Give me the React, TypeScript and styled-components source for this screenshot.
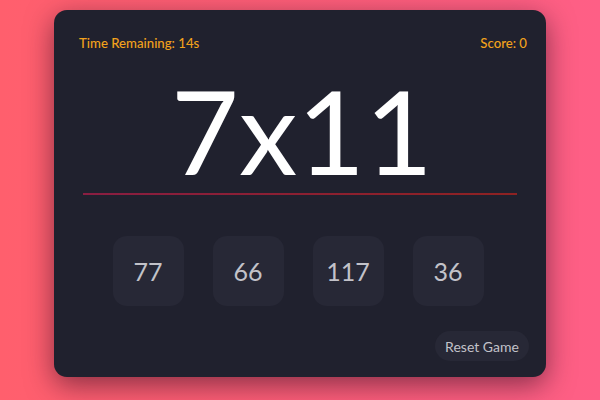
import React from "react";
import styled, { createGlobalStyle } from "styled-components";

const Global = createGlobalStyle`
  html, body { margin: 0; padding: 0; }
  body {
    font-family: Lato, "Noto Sans", sans-serif;
    background: linear-gradient(to right, #ff5f6d, #fe5f86);
    width: 600px;
    height: 400px;
    overflow: hidden;
  }
`;

const Page = styled.div`
  width: 600px;
  height: 400px;
  display: flex;
  justify-content: center;
  align-items: flex-start;
  padding-top: 10px;
  box-sizing: border-box;
`;

const Card = styled.div`
  width: 492px;
  height: 367px;
  box-sizing: border-box;
  background: #20212e;
  border-radius: 13px;
  box-shadow: 0 8px 28px rgba(40, 10, 30, 0.55);
  padding: 25px 17px 16px 25px;
  display: flex;
  flex-direction: column;
`;

const Header = styled.div`
  display: flex;
  justify-content: space-between;
  padding-right: 2px;
  font-size: 13.2px;
  font-weight: 500;
  line-height: 17px;
  color: #f2a21c;
`;

const Problem = styled.div`
  margin-top: 20px;
  font-size: 117px;
  line-height: 117px;
  color: #ffffff;
  text-align: center;
  padding-left: 2px;
  padding-right: 6px;
`;

const Divider = styled.div`
  margin: 4px 12px 0 4px;
  height: 2px;
  background: linear-gradient(to right, #8a1e42, #8e2222);
`;

const Choices = styled.div`
  margin-top: 41px;
  display: flex;
  justify-content: center;
  gap: 29px;
  padding-right: 12px;
`;

const Choice = styled.button`
  width: 71px;
  height: 70px;
  border: none;
  border-radius: 14px;
  background: #272836;
  color: #c2c2c9;
  font-family: Lato, sans-serif;
  font-size: 25px;
  padding: 0;
`;

const Footer = styled.div`
  margin-top: 25px;
  display: flex;
  justify-content: flex-end;
`;

const Reset = styled.button`
  width: 94px;
  height: 30px;
  border: none;
  border-radius: 15px;
  background: #272836;
  color: #c2c2c9;
  font-family: Lato, sans-serif;
  font-size: 14px;
  padding: 0;
`;

export default function App() {
  const answers = [77, 66, 117, 36];
  return (
    <>
      <Global />
      <Page>
        <Card>
          <Header>
            <span>Time Remaining: 14s</span>
            <span>Score: 0</span>
          </Header>
          <Problem>7x11</Problem>
          <Divider />
          <Choices>
            {answers.map((a) => (
              <Choice key={a}>{a}</Choice>
            ))}
          </Choices>
          <Footer>
            <Reset>Reset Game</Reset>
          </Footer>
        </Card>
      </Page>
    </>
  );
}
